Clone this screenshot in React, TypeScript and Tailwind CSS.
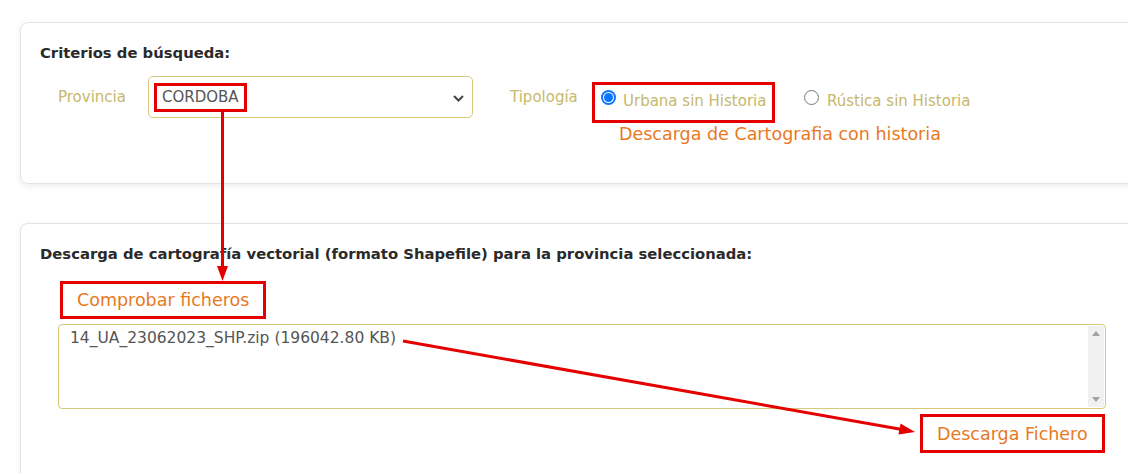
import React from "react";

const RED = "border-[3px] border-[#e50000]";

function Radio({ checked }: { checked?: boolean }) {
  return checked ? (
    <span className="inline-block w-[15px] h-[15px] rounded-full bg-[#0a75ff] relative shrink-0">
      <span className="absolute left-[2px] top-[2px] w-[11px] h-[11px] rounded-full bg-white" />
      <span className="absolute left-[3px] top-[3px] w-[9px] h-[9px] rounded-full bg-[#0a75ff]" />
    </span>
  ) : (
    <span className="inline-block w-[15px] h-[15px] rounded-full border border-[#767676] bg-white shrink-0" />
  );
}

export default function App() {
  return (
    <div className="relative w-[1128px] h-[473px] overflow-hidden bg-white font-['DejaVu_Sans',Verdana,sans-serif]">
      <div className="pl-[20px] pt-[22px] flex flex-col gap-[39px] w-[1170px]">
        {/* Card 1 */}
        <div className="h-[162px] rounded-[8px] border border-[#e4e4e4] bg-white shadow-[0_2px_6px_rgba(0,0,0,0.08)] pt-[21px] pl-[19px]">
          <h2 className="text-[14.8px] leading-[18px] font-bold text-[#2a2a2a]">Criterios de búsqueda:</h2>
          <div className="flex items-start mt-[14px]">
            <div className="flex items-center h-[42px] w-[108px] pl-[18px] text-[15px] leading-[18px] text-[#c6b86c]">
              Provincia
            </div>
            <div className="relative w-[325px] h-[42px] rounded-[5px] border border-[#d8c97a] bg-white flex items-center pl-[13px]">
              <span className="text-[15px] leading-[18px] text-[#555]">CORDOBA</span>
              <svg className="absolute right-[8px] top-[18px]" width="11" height="7" viewBox="0 0 11 7">
                <path d="M1 1 L5.5 5.5 L10 1" fill="none" stroke="#444" strokeWidth="2" />
              </svg>
              <div className={`absolute left-[5px] top-[6px] w-[93px] h-[29px] ${RED}`} />
            </div>
            <div className="ml-[37px] mt-[12px] w-[82px] text-[15px] leading-[18px] text-[#c6b86c]">Tipología</div>
            <div className="mt-[6px] w-[183px] flex flex-col">
              <div className={`w-[183px] h-[41px] ${RED} flex items-start pl-[6px]`}>
                <span className="mt-[5px] flex"><Radio checked /></span>
                <span className="ml-[7px] mt-[7px] text-[15px] leading-[18px] text-[#c6b86c] whitespace-nowrap">Urbana sin Historia</span>
              </div>
              <div className="ml-[27px] mt-[1px] text-[17.5px] leading-[20px] text-[#e8791f] whitespace-nowrap">
                Descarga de Cartografia con historia
              </div>
            </div>
            <div className="ml-[29px] flex items-start">
              <span className="mt-[14px] flex"><Radio /></span>
              <span className="ml-[8px] mt-[16px] text-[15px] leading-[18px] text-[#c6b86c] whitespace-nowrap">Rústica sin Historia</span>
            </div>
          </div>
        </div>

        {/* Card 2 */}
        <div className="h-[300px] rounded-[8px] border border-[#e4e4e4] bg-white shadow-[0_2px_6px_rgba(0,0,0,0.08)] pt-[21px] pl-[19px]">
          <h2 className="text-[14.8px] leading-[18px] font-bold text-[#2a2a2a] whitespace-nowrap">
            Descarga de cartografía vectorial (formato Shapefile) para la provincia seleccionada:
          </h2>
          <div className={`ml-[20px] mt-[18px] w-[206px] h-[38px] ${RED} flex items-center pl-[14px]`}>
            <span className="text-[17.5px] leading-[20px] text-[#e8791f] whitespace-nowrap">Comprobar ficheros</span>
          </div>
          <div className="ml-[18px] mt-[5px] w-[1048px]">
            <div className="h-[85px] rounded-[4px] border border-[#d8c97a] bg-white flex">
              <div className="flex-1 pl-[11px] pt-[4px] text-[15.5px] leading-[19px] text-[#555]">
                14_UA_23062023_SHP.zip (196042.80 KB)
              </div>
              <div className="w-[16px] bg-[#f1f1f1] flex flex-col justify-between items-center py-[5px] mr-[1px] my-[1px]">
                <svg width="8" height="5" viewBox="0 0 8 5"><path d="M0 5 L4 0 L8 5 Z" fill="#a3a3a3" /></svg>
                <svg width="8" height="5" viewBox="0 0 8 5"><path d="M0 0 L4 5 L8 0 Z" fill="#a3a3a3" /></svg>
              </div>
            </div>
            <div className="flex justify-end mt-[5px] pr-[1px]">
              <div className={`w-[185px] h-[39px] ${RED} flex items-center pl-[14px]`}>
                <span className="text-[17.5px] leading-[20px] text-[#e8791f] whitespace-nowrap">Descarga Fichero</span>
              </div>
            </div>
          </div>
        </div>
      </div>

      {/* Annotation arrows */}
      <svg className="absolute inset-0 pointer-events-none" width="1128" height="473">
        <line x1="222.5" y1="111" x2="222.5" y2="268" stroke="#e50000" strokeWidth="3" />
        <polygon points="217,266 228,266 222.5,281" fill="#e50000" />
        <line x1="403" y1="341" x2="902" y2="429.5" stroke="#e50000" strokeWidth="3" />
        <polygon points="915,432 898.5,434.5 900.5,423.5" fill="#e50000" />
      </svg>
    </div>
  );
}
